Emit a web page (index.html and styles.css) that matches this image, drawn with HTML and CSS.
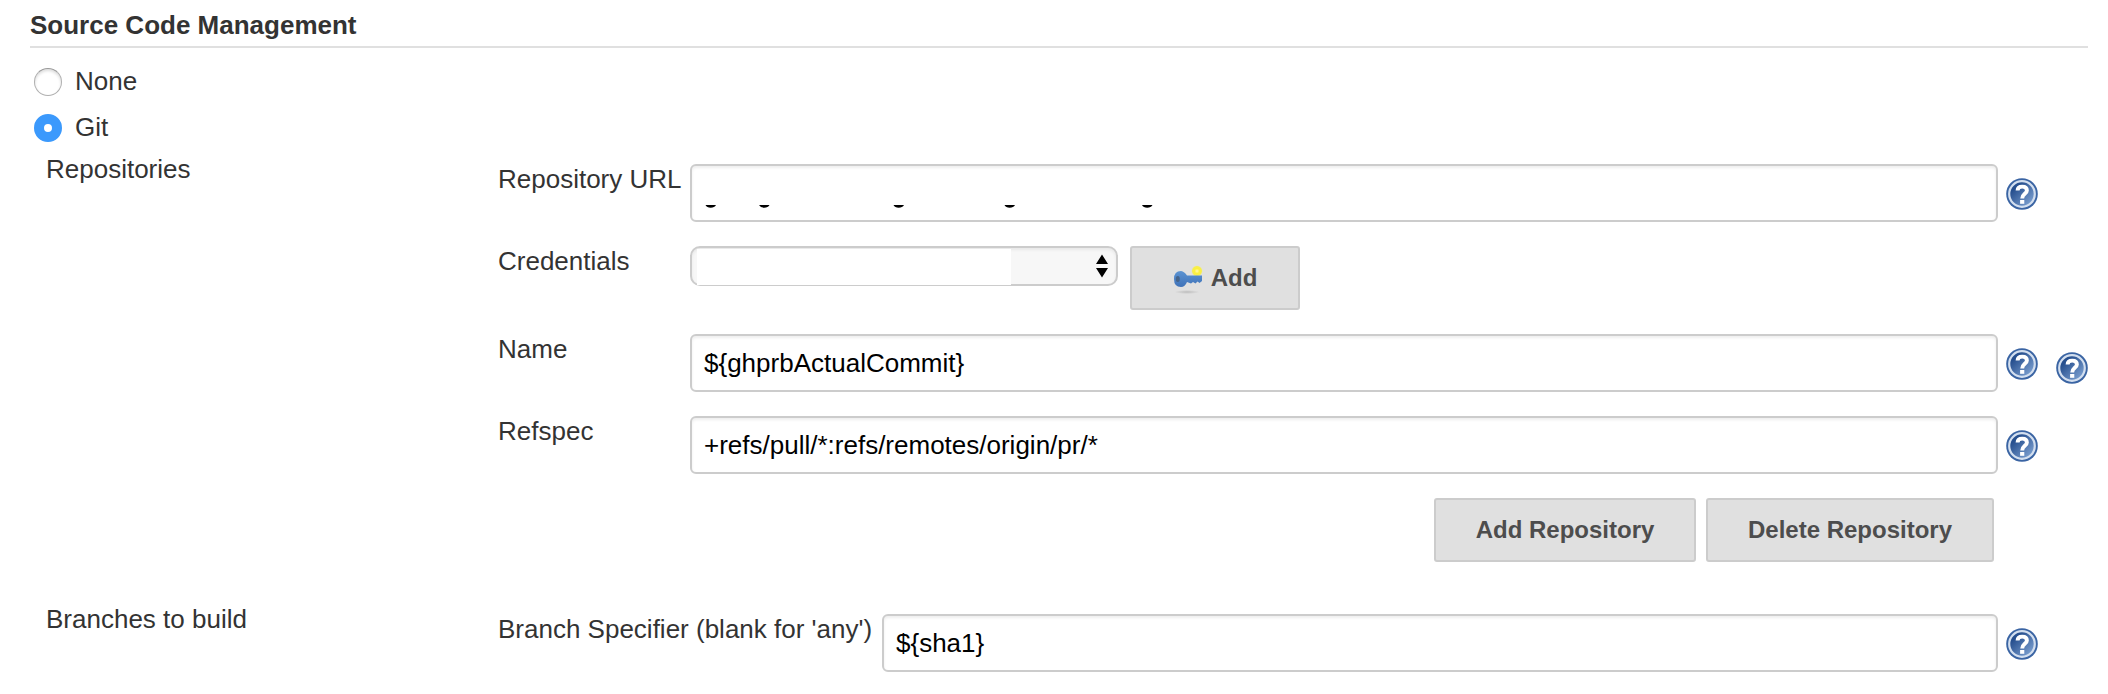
FILE: index.html
```html
<!DOCTYPE html>
<html lang="en">
<head>
<meta charset="utf-8">
<title>Source Code Management</title>
<link rel="stylesheet" href="styles.css">
</head>
<body>
<svg class="defs" width="0" height="0" aria-hidden="true">
  <defs>
    <linearGradient id="blue" x1="0" y1="0" x2="1" y2="1">
      <stop offset="0.25" stop-color="#27508f"/><stop offset="0.95" stop-color="#86a9d8"/>
    </linearGradient>
    <linearGradient id="steel" x1="0" y1="0" x2="0" y2="1">
      <stop offset="0" stop-color="#5b93d2"/><stop offset="1" stop-color="#3f72b8"/>
    </linearGradient>
    <radialGradient id="spark">
      <stop offset="0" stop-color="#fffbb0"/><stop offset="0.45" stop-color="#fcf03c"/><stop offset="0.8" stop-color="#f6ee50"/><stop offset="1" stop-color="#eeea90" stop-opacity="0.3"/>
    </radialGradient>
    <radialGradient id="shade">
      <stop offset="0" stop-color="#bcbcbc"/><stop offset="1" stop-color="#e0e0e0"/>
    </radialGradient>
    <symbol id="help" viewBox="0 0 32 32">
      <circle cx="16" cy="16" r="15.8" fill="#3a64a3"/>
      <circle cx="16" cy="16" r="12.8" fill="url(#blue)" stroke="#d3dfef" stroke-width="2.2"/>
      <path d="M11.600 12.600C11.600 9.600 13.500 8.600 16.200 8.600c2.800 0 4.700 1.300 4.700 3.800 0 3.400-4.700 3.600-4.700 8" fill="none" stroke="#fff" stroke-width="3.900"/>
      <rect x="14.100" y="22" width="4.200" height="3.800" fill="#fff"/>
    </symbol>
  </defs>
</svg>
<main class="section">
  <h1 class="title">Source Code Management</h1>
  <div class="choice"><span class="radio"></span>None</div>
  <div class="choice choice-git"><span class="radio radio-on"></span>Git</div>
  <div class="group">
    <div class="name">Repositories</div>
    <div class="rows">
      <div class="row"><div class="label">Repository URL</div><div class="input">
        <svg class="marks" width="460" height="6" viewBox="0 0 460 6"><path d="M1.500 0H12Q10.500 2.700 6.700 2.700T1.500 0zM55 0H65.500Q64 2.700 60.200 2.700T55 0zM189.500 0H200Q198.500 2.700 194.700 2.700T189.500 0zM300.500 0H311Q309.500 2.700 305.700 2.700T300.500 0zM438 0H448.500Q447 2.700 443.200 2.700T438 0z"/></svg>
      </div><svg class="help"><use href="#help"/></svg></div>
      <div class="row"><div class="label">Credentials</div><div class="select"><span class="blank"></span><svg class="arrows" width="12" height="24" viewBox="0 0 12 24"><path d="M6 0.500L12 10H0zM0 14H12L6 23.500z"/></svg></div>
        <div class="button button-add"><svg width="32" height="32" viewBox="0 0 32 32"><ellipse cx="14" cy="30" rx="12.500" ry="2" fill="url(#shade)"/><circle cx="24" cy="9" r="5.600" fill="url(#spark)"/><path d="M1 17Q1 9 8 9 11.500 9.500 14 13.500H29V19L26.500 21 24.500 19.500 22.500 21.500 20 20 18 21.500 14 20Q12 25 8 25 1 25 1 17z" fill="url(#steel)"/><ellipse cx="4.800" cy="17" rx="2" ry="3" fill="#46648a"/></svg>Add</div></div>
      <div class="row"><div class="label">Name</div><div class="input">${ghprbActualCommit}</div><svg class="help"><use href="#help"/></svg></div>
      <div class="row"><div class="label">Refspec</div><div class="input">+refs/pull/*:refs/remotes/origin/pr/*</div><svg class="help"><use href="#help"/></svg></div>
      <div class="row actions"><div class="button button-repo">Add Repository</div><div class="button button-delete">Delete Repository</div></div>
    </div>
    <svg class="help help-group"><use href="#help"/></svg>
  </div>
  <div class="group group-branches">
    <div class="name">Branches to build</div>
    <div class="rows">
      <div class="row"><div class="label label-wide">Branch Specifier (blank for 'any')</div><div class="input">${sha1}</div><svg class="help"><use href="#help"/></svg></div>
    </div>
  </div>
</main>
</body>
</html>
```
FILE: styles.css
```css
* { box-sizing: border-box; }
body {
  margin: 0;
  background: #fff;
  color: #333;
  font: 26px/30px "Liberation Sans", Arial, sans-serif;
}
svg { display: block; flex: none; }
.defs { position: absolute; }
.section { width: 2088px; padding: 10px 0 0 30px; white-space: nowrap; }
.title {
  height: 38px;
  margin: 0 0 18px;
  border-bottom: 2px solid #e0e0e0;
  font-size: 26px;
  line-height: 30px;
}
.choice { display: flex; align-items: center; gap: 13px; height: 30px; padding-left: 4px; }
.choice-git { margin-top: 16px; }
.radio {
  width: 28px;
  height: 28px;
  margin-top: 2px;
  border: 1px solid #b0b0b0;
  border-top-color: #999;
  border-radius: 50%;
  box-shadow: inset 0 2px 3px #ddd;
}
.radio-on { border: 10px solid #3b99fc; box-shadow: none; }
.group {
  display: grid;
  grid-template-columns: 434px 1540px 32px;
  column-gap: 18px;
  margin-top: 12px;
  padding-left: 16px;
}
.group-branches { margin-top: 42px; }
.rows { display: flex; flex-direction: column; gap: 24px; padding-top: 10px; }
.row { display: flex; align-items: flex-start; }
.label { width: 192px; flex: none; }
.label-wide { width: 384px; }
.input {
  display: flex;
  flex: 1;
  align-items: center;
  height: 58px;
  padding: 0 12px;
  border: 2px solid #ccc;
  border-radius: 6px;
  box-shadow: inset 0 2px 3px #eee;
  color: #000;
}
.marks { align-self: flex-end; margin-bottom: 9px; }
.help { width: 32px; height: 32px; margin: 14px 0 0 8px; }
.help-group { margin: 198px 0 0; }
.select {
  display: flex;
  align-items: center;
  justify-content: space-between;
  width: 428px;
  height: 40px;
  margin-right: 12px;
  padding: 0 8px 0 5px;
  border: 2px solid #ccc;
  border-radius: 10px;
  background: #f7f7f7;
  box-shadow: inset 0 2px 3px #e8e8e8;
}
.blank { width: 314px; height: 36px; margin-top: 1px; margin-bottom: -1px; background: #fff; }
.button {
  display: flex;
  align-items: center;
  justify-content: center;
  height: 64px;
  border: 2px solid #ccc;
  border-radius: 3px;
  background: #e0e0e0;
  color: #4d4d4d;
  font-size: 24px;
  font-weight: bold;
}
.button-add { width: 170px; gap: 6px; }
.actions { justify-content: flex-end; gap: 10px; padding-right: 44px; }
.button-repo { width: 262px; }
.button-delete { width: 288px; }
```
